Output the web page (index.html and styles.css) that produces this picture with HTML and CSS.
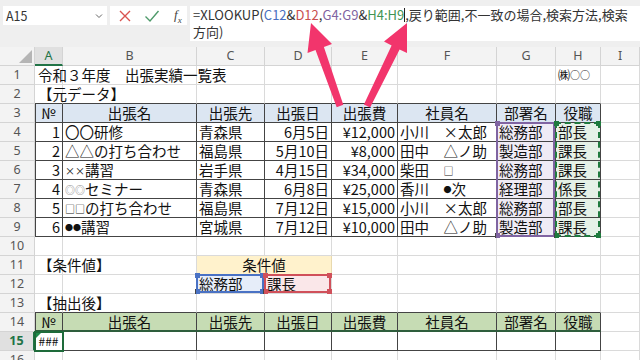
FILE: index.html
```html
<!DOCTYPE html>
<html lang="ja">
<head>
    <meta charset="UTF-8">
    <meta name="viewport" content="width=device-width, initial-scale=1.0">
    <title>出張実績一覧表</title>
    <link rel="stylesheet" href="styles.css">
</head>
<body>

    <div class="toolbar">
        <div class="namebox">
            <span>A15</span>
            <svg class="chev" width="8" height="6" viewBox="0 0 8 6"><path d="M1 1.5 L4 4.5 L7 1.5" fill="none" stroke="#666" stroke-width="1"/></svg>
        </div>
        <div class="fxbox">
            <svg width="14" height="14" viewBox="0 0 14 14"><path d="M2 2 L12 12 M12 2 L2 12" stroke="#d9534f" stroke-width="1.4" fill="none"/></svg>
            <svg width="16" height="14" viewBox="0 0 16 14"><path d="M1.5 7.5 L6 12 L14.5 2" stroke="#4e9a6a" stroke-width="1.4" fill="none"/></svg>
            <span class="fx">f<sub>x</sub></span>
        </div>
        <div class="formula">=XLOOKUP(<span class="f-blue">C12</span>&amp;<span class="f-red">D12</span>,<span class="f-purple">G4:G9</span>&amp;<span class="f-green">H4:H9</span><span class="caret"></span>,戻り範囲,不一致の場合,検索方法,検索<br>方向)</div>
    </div>

    <div class="sheet">
        <div class="row hdr">
            <div class="corner"><span class="tri"></span></div>
            <div class="ch sel">A</div><div class="ch">B</div><div class="ch">C</div><div class="ch">D</div>
            <div class="ch">E</div><div class="ch">F</div><div class="ch">G</div><div class="ch">H</div><div class="ch">I</div>
        </div>

        <div class="row">
            <div class="rh">1</div>
            <div class="c wide">令和３年度　出張実績一覧表</div><div class="c"></div><div class="c"></div><div class="c"></div>
            <div class="c"></div><div class="c"></div><div class="c"></div><div class="c small">㈱<span class="mini">○○</span></div><div class="c"></div>
        </div>

        <div class="row">
            <div class="rh">2</div>
            <div class="c bb wide">【元データ】</div><div class="c bb"></div><div class="c bb"></div><div class="c bb"></div>
            <div class="c bb"></div><div class="c bb"></div><div class="c bb"></div><div class="c bb"></div><div class="c"></div>
        </div>

        <div class="row">
            <div class="rh">3</div>
            <div class="c b bl th ctr">№</div><div class="c b th ctr">出張名</div><div class="c b th ctr">出張先</div><div class="c b th ctr">出張日</div>
            <div class="c b th ctr">出張費</div><div class="c b th ctr">社員名</div><div class="c b th ctr">部署名</div><div class="c b th ctr">役職</div><div class="c"></div>
        </div>

        <div class="row">
            <div class="rh">4</div>
            <div class="c b bl r">1</div><div class="c b">〇〇研修</div><div class="c b">青森県</div><div class="c b r">6月5日</div>
            <div class="c b r">¥12,000</div><div class="c b">小川　×太郎</div>
            <div class="c b pg">総務部<div class="hl purple span6"><i class="sq tl"></i><i class="sq bl"></i></div></div>
            <div class="c b gg">部長<div class="hl ants span6"><i class="sq tl"></i><i class="sq tr"></i><i class="sq bl"></i><i class="sq br"></i></div></div>
            <div class="c"></div>
        </div>

        <div class="row">
            <div class="rh">5</div>
            <div class="c b bl r">2</div><div class="c b">△△の打ち合わせ</div><div class="c b">福島県</div><div class="c b r">5月10日</div>
            <div class="c b r">¥8,000</div><div class="c b">田中　△ノ助</div><div class="c b pg">製造部</div><div class="c b gg">課長</div><div class="c"></div>
        </div>

        <div class="row">
            <div class="rh">6</div>
            <div class="c b bl r">3</div><div class="c b"><span class="mini">××</span>講習</div><div class="c b">岩手県</div><div class="c b r">4月15日</div>
            <div class="c b r">¥34,000</div><div class="c b">柴田　<span class="mini">□</span></div><div class="c b pg">総務部</div><div class="c b gg">課長</div><div class="c"></div>
        </div>

        <div class="row">
            <div class="rh">7</div>
            <div class="c b bl r">4</div><div class="c b"><span class="mini grey">◎◎</span>セミナー</div><div class="c b">青森県</div><div class="c b r">6月8日</div>
            <div class="c b r">¥25,000</div><div class="c b">香川　<span class="dot">●</span>次</div><div class="c b pg">経理部</div><div class="c b gg">係長</div><div class="c"></div>
        </div>

        <div class="row">
            <div class="rh">8</div>
            <div class="c b bl r">5</div><div class="c b"><span class="mini">□□</span>の打ち合わせ</div><div class="c b">福島県</div><div class="c b r">7月12日</div>
            <div class="c b r">¥15,000</div><div class="c b">小川　×太郎</div><div class="c b pg">総務部</div><div class="c b gg">部長</div><div class="c"></div>
        </div>

        <div class="row">
            <div class="rh">9</div>
            <div class="c b bl r">6</div><div class="c b"><span class="dot">●●</span>講習</div><div class="c b">宮城県</div><div class="c b r">7月12日</div>
            <div class="c b r">¥10,000</div><div class="c b">田中　△ノ助</div><div class="c b pg">製造部</div><div class="c b gg">課長</div><div class="c"></div>
        </div>

        <div class="row">
            <div class="rh">10</div>
            <div class="c"></div><div class="c"></div><div class="c"></div><div class="c"></div>
            <div class="c"></div><div class="c"></div><div class="c"></div><div class="c"></div><div class="c"></div>
        </div>

        <div class="row">
            <div class="rh">11</div>
            <div class="c wide">【条件値】</div><div class="c"></div><div class="c merge yellow ctr">条件値</div>
            <div class="c"></div><div class="c"></div><div class="c"></div><div class="c"></div><div class="c"></div>
        </div>

        <div class="row">
            <div class="rh">12</div>
            <div class="c"></div><div class="c"></div>
            <div class="c blue-fill">総務部<div class="hl blue"><i class="sq tl"></i><i class="sq tr"></i><i class="sq bl"></i><i class="sq br"></i></div></div>
            <div class="c red-fill">課長<div class="hl red"><i class="sq tl"></i><i class="sq tr"></i><i class="sq bl"></i><i class="sq br"></i></div></div>
            <div class="c"></div><div class="c"></div><div class="c"></div><div class="c"></div><div class="c"></div>
        </div>

        <div class="row">
            <div class="rh">13</div>
            <div class="c bb wide">【抽出後】</div><div class="c bb"></div><div class="c bb"></div><div class="c bb"></div>
            <div class="c bb"></div><div class="c bb"></div><div class="c bb"></div><div class="c bb"></div><div class="c"></div>
        </div>

        <div class="row">
            <div class="rh">14</div>
            <div class="c b bl tg gb ctr">№</div><div class="c b tg gb ctr">出張名</div><div class="c b tg gb ctr">出張先</div><div class="c b tg gb ctr">出張日</div>
            <div class="c b tg gb ctr">出張費</div><div class="c b tg gb ctr">社員名</div><div class="c b tg gb ctr">部署名</div><div class="c b tg gb ctr">役職</div><div class="c"></div>
        </div>

        <div class="row">
            <div class="rh sel">15</div>
            <div class="c b bl active"><span class="err"></span>###</div><div class="c b"></div><div class="c b"></div><div class="c b"></div>
            <div class="c b"></div><div class="c b"></div><div class="c b"></div><div class="c b"></div><div class="c"></div>
        </div>

        <div class="row">
            <div class="rh">16</div>
            <div class="c"></div><div class="c"></div><div class="c"></div><div class="c"></div>
            <div class="c"></div><div class="c"></div><div class="c"></div><div class="c"></div><div class="c"></div>
        </div>
    </div>

    <!-- callout arrows pointing at the lookup arguments -->
    <svg class="arrows" width="640" height="360" viewBox="0 0 640 360">
        <polygon points="343.3,104.8 323.9,47 332,44 311,23 307.5,53 315.5,50 336.7,107.2" fill="#f2356c"/>
        <polygon points="370.1,107.5 399.6,49.4 407,53 407,23 384,41.5 391.6,45.4 363.9,104.5" fill="#f2356c"/>
    </svg>

</body>
</html>
```

FILE: styles.css
```css
body {
    margin: 0;
    width: 640px;
    height: 360px;
    overflow: hidden;
    position: relative;
    background-color: #ffffff;
    font-family: "Noto Sans CJK JP", sans-serif;
    color: #111;
}

/* formula bar */
.toolbar {
    height: 47px;
    background-color: #efefef;
    display: flex;
    align-items: flex-start;
    gap: 3px;
    padding: 6px 0 0 3px;
    box-sizing: border-box;
}
.namebox {
    width: 104px;
    height: 19px;
    background-color: #ffffff;
    display: flex;
    align-items: center;
    justify-content: space-between;
    padding: 0 4px 0 3px;
    box-sizing: border-box;
    font-size: 12.5px;
    color: #333;
}
.fxbox {
    width: 77px;
    height: 19px;
    background-color: #ffffff;
    display: flex;
    align-items: center;
    gap: 12px;
    padding-left: 8px;
    box-sizing: border-box;
}
.fx {
    font-family: "Liberation Serif", serif;
    font-style: italic;
    font-size: 13px;
    color: #444;
    margin-left: 2px;
}
.fx sub {
    font-size: 9px;
}
.formula {
    flex: 1;
    height: 35px;
    background-color: #ffffff;
    padding: 1px 3px;
    box-sizing: border-box;
    font-size: 13px;
    line-height: 16.5px;
    white-space: nowrap;
    color: #333;
}
.f-blue { color: #4a6fc0; }
.f-red { color: #c9504f; }
.f-purple { color: #8064a2; }
.f-green { color: #3f9453; }
.caret {
    display: inline-block;
    width: 1px;
    height: 14px;
    background-color: #222;
    vertical-align: -2px;
}

/* sheet grid */
.row {
    display: grid;
    grid-template-columns: 35px 28px 134px 68px 67px 66px 99px 59px 45px 39px;
    height: 19px;
}
.row > div {
    box-sizing: border-box;
    height: 19px;
}
.corner, .ch, .rh {
    background-color: #f3f3f3;
    border-right: 1px solid #d4d4d4;
    border-bottom: 1px solid #d4d4d4;
    color: #555;
    font-family: "Noto Sans", sans-serif;
    font-size: 12.5px;
    line-height: 18px;
    text-align: center;
}
.corner {
    position: relative;
}
.tri {
    position: absolute;
    right: 2px;
    bottom: 2px;
    width: 0;
    height: 0;
    border-left: 13px solid transparent;
    border-bottom: 13px solid #b5b5b5;
}
.ch.sel {
    background-color: #e0e0e0;
    color: #217346;
    border-bottom: 2px solid #217346;
}
.rh.sel {
    background-color: #e0e0e0;
    color: #217346;
    font-weight: bold;
    border-right: 2px solid #217346;
}

.c {
    position: relative;
    border-right: 1px solid #dadada;
    border-bottom: 1px solid #dadada;
    font-size: 14.5px;
    line-height: 18px;
    padding: 0 2px;
    white-space: nowrap;
}
.wide {
    overflow: visible;
    z-index: 1;
    padding-left: 3px;
}
.r { text-align: right; }
.ctr { text-align: center; }
.small { font-size: 12px; }
.mini { font-size: 10px; vertical-align: 1px; }
.dot { font-size: 8px; vertical-align: 2px; }
.grey { color: #888; }

.b {
    border-right-color: #444;
    border-bottom-color: #444;
}
.bl { box-shadow: inset 1px 0 0 #444; }
.bb { border-bottom-color: #444; }
.th { background-color: #dce6f2; }
.tg { background-color: #c6dcb4; }
.gb { border-bottom: 2px solid #2e5e3c; }
.pg { background-color: #efebf5; }
.gg { background-color: #e5f1e7; }

.merge {
    grid-column: span 2;
}
.yellow {
    background-color: #fff2cc;
    border-right-color: #e8d9ae;
    border-bottom-color: #e8d9ae;
}
.blue-fill { background-color: #e6edf9; }
.red-fill { background-color: #fae7e9; }

/* range highlights drawn over the cells */
.hl {
    position: absolute;
    top: -1px;
    left: -1px;
    right: 0;
    bottom: 0;
    box-sizing: border-box;
    border: 2px solid;
    z-index: 2;
}
.span6 {
    bottom: auto;
    height: 115px;
}
.purple { border-color: #8064a2; color: #8064a2; }
.ants { border: 2px dashed #1f7a3e; color: #1f7a3e; }
.blue { border-color: #4a72c4; color: #4a72c4; }
.red { border-color: #d0505a; color: #d0505a; }
.sq {
    position: absolute;
    width: 5px;
    height: 5px;
    background-color: currentColor;
}
.sq.tl { top: -3px; left: -3px; }
.sq.tr { top: -3px; right: -3px; }
.sq.bl { bottom: -3px; left: -3px; }
.sq.br { bottom: -3px; right: -3px; }

.active {
    outline: 2px solid #1e6b3a;
    outline-offset: -1px;
    z-index: 2;
    font-size: 12px;
    text-align: center;
    padding: 0;
}
.err {
    position: absolute;
    top: 1px;
    left: 1px;
    width: 0;
    height: 0;
    border-top: 5px solid #1e8a4a;
    border-right: 5px solid transparent;
}

.arrows {
    position: absolute;
    top: 0;
    left: 0;
    pointer-events: none;
    z-index: 10;
}
```
